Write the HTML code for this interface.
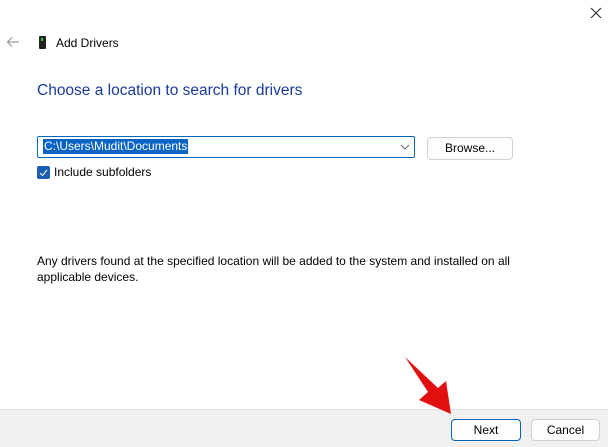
<!DOCTYPE html>
<html><head><style>
body{margin:0;width:608px;height:446px;background:#fff;position:relative;overflow:hidden;font-family:"Liberation Sans",sans-serif;font-size:12px;color:#000}
.a{position:absolute}
.btn{position:absolute;border:1px solid #d0d0d0;border-radius:4px;background:#fdfdfd;text-align:center;box-sizing:border-box;font-size:12px}
</style></head><body>
<svg class="a" style="left:590px;top:7px" width="12" height="12"><path d="M1 1L11 11M11 1L1 11" stroke="#222" stroke-width="1"/></svg>
<svg class="a" style="left:6px;top:36px" width="14" height="12"><path d="M13 6H2M6 1.5L1.5 6L6 10.5" stroke="#999" stroke-width="1.2" fill="none"/></svg>
<div class="a" style="left:39px;top:36px;width:7px;height:13px;background:#222;border-radius:1px"></div>
<div class="a" style="left:41px;top:38px;width:2px;height:3px;background:#3c3"></div>
<div class="a" style="left:56px;top:36px;font-size:12px">Add Drivers</div>
<div class="a" style="left:37px;top:82px;font-size:15.5px;color:#1a3a9a">Choose a location to search for drivers</div>
<div class="a" style="left:37px;top:136px;width:378px;height:22px;border:1px solid #0067c0;box-sizing:border-box;border-radius:2px"></div>
<div class="a" style="left:43px;top:139px;height:15px;background:#0a64c6;color:#fff;padding:0 1px;line-height:15px">C:\Users\Mudit\Documents</div>
<svg class="a" style="left:400px;top:144px" width="10" height="6"><path d="M1 1l4 4 4-4" stroke="#666" fill="none"/></svg>
<div class="btn" style="left:427px;top:137px;width:86px;height:23px;line-height:21px">Browse...</div>
<div class="a" style="left:37px;top:166px;width:13px;height:13px;background:#1a5fb4;border-radius:2px"></div>
<svg class="a" style="left:39px;top:168px" width="9" height="9"><path d="M1 5l2.5 2.5L8 2" stroke="#fff" fill="none"/></svg>
<div class="a" style="left:54px;top:165px">Include subfolders</div>
<div class="a" style="left:37px;top:253px;width:520px;line-height:16px">Any drivers found at the specified location will be added to the system and installed on all applicable devices.</div>
<div class="a" style="left:0;top:409px;width:608px;height:37px;background:#f0f0f0;border-top:1px solid #e0e0e0"></div>
<div class="btn" style="left:451px;top:419px;width:70px;height:22px;line-height:20px;border-color:#0067c0">Next</div>
<div class="btn" style="left:531px;top:419px;width:69px;height:22px;line-height:20px">Cancel</div>
<svg class="a" style="left:395px;top:350px" width="70" height="70"><path d="M10 7L33 42L24 50L56 64L51 31L43 38Z" fill="#e01010"/></svg>
</body></html>
